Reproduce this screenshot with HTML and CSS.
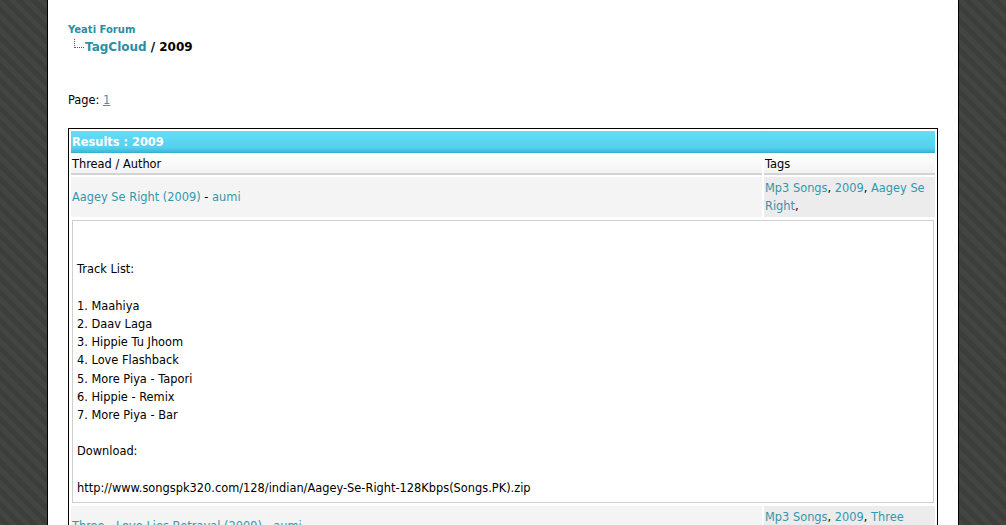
FILE: index.html
```html
<!DOCTYPE html>
<html>
<head>
<meta charset="utf-8">
<title>Yeati Forum - TagCloud / 2009</title>
<link rel="stylesheet" href="styles.css">
</head>
<body>
<div class="page">
  <div class="crumbs">
    <a class="crumb-root" href="#">Yeati Forum</a>
    <div class="crumb-child">
      <span class="tree"></span>
      <a class="crumb-link" href="#">TagCloud</a> <span class="crumb-current">/ 2009</span>
    </div>
  </div>

  <div class="pager">Page: <a href="#">1</a></div>

  <table class="results">
    <tr><td class="title" colspan="2">Results : 2009</td></tr>
    <tr class="head"><td class="h-thread">Thread / Author</td><td class="h-tags">Tags</td></tr>
    <tr class="row">
      <td class="c-thread"><a href="#">Aagey Se Right (2009)</a> - <a href="#">aumi</a></td>
      <td class="c-tags"><a href="#">Mp3 Songs</a>, <a href="#">2009</a>, <a href="#">Aagey Se Right</a>,</td>
    </tr>
    <tr>
      <td class="c-body" colspan="2">
        <div class="post">
          <br><br>Track List:<br><br>1. Maahiya<br>2. Daav Laga<br>3. Hippie Tu Jhoom<br>4. Love Flashback<br>5. More Piya - Tapori<br>6. Hippie - Remix<br>7. More Piya - Bar<br><br>Download:<br><br>http://www.songspk320.com/128/indian/Aagey-Se-Right-128Kbps(Songs.PK).zip
        </div>
      </td>
    </tr>
    <tr class="row">
      <td class="c-thread"><a href="#">Three - Love Lies Betrayal (2009)</a> - <a href="#">aumi</a></td>
      <td class="c-tags"><a href="#">Mp3 Songs</a>, <a href="#">2009</a>, <a href="#">Three Love Lies Betrayal</a>,</td>
    </tr>
  </table>
</div>
</body>
</html>
```

FILE: styles.css
```css
html, body {
  margin: 0;
  padding: 0;
}
body {
  background-color: #3e403d;
  background-image: repeating-linear-gradient(45deg, #3c3e3b 0px, #3c3e3b 5px, #434542 5px, #434542 10px);
  font-family: "DejaVu Sans", Verdana, sans-serif;
  font-size: 11.4px;
  color: #000;
  min-height: 525px;
}
a {
  color: #3397ad;
  text-decoration: none;
}
.page {
  width: 870px;
  margin: 0 auto;
  background: #fff;
  border-left: 1px solid #000;
  border-right: 1px solid #000;
  padding: 23px 20px 40px 20px;
  min-height: 600px;
}
.crumbs {
  line-height: 13px;
}
.crumb-root {
  font-weight: bold;
  font-size: 10px;
  color: #2b8ea4;
}
.crumb-child {
  display: flex;
  align-items: flex-end;
  margin-left: 6px;
  margin-top: 3px;
  font-size: 12px;
  font-weight: bold;
  line-height: 16px;
}
.tree {
  width: 9px;
  height: 8px;
  border-left: 1px dotted #555;
  border-bottom: 1px dotted #555;
  margin-bottom: 6px;
  margin-right: 1px;
  align-self: flex-start;
}
.crumb-link {
  color: #2b8ea4;
  margin-right: 4px;
}
.crumb-current {
  color: #000;
}
.pager {
  margin-top: 39px;
  line-height: 13px;
}
.pager a {
  text-decoration: underline;
}
.results {
  width: 100%;
  margin-top: 21px;
  border: 1px solid #000;
  border-collapse: separate;
  border-spacing: 2px;
  font-size: 11.4px;
}
.results td {
  padding: 0;
  vertical-align: middle;
}
.title {
  height: 21px;
  background: linear-gradient(#66ddf8, #55d0ee 80%, #3fb8dc);
  color: #fff;
  font-weight: bold;
  padding: 0 0 0 1px !important;
  border-bottom: 1px solid #3aafd4;
}
.head td {
  height: 18px;
  background: linear-gradient(#ffffff, #f2f2f2);
  border-bottom: 2px solid #d3d3d3;
  padding-left: 1px !important;
}
.h-tags {
  width: 170px;
}
.row td {
  background: #f4f4f4;
  line-height: 18px;
  padding: 2px 1px !important;
}
.row .c-tags {
  background: #ececec;
  vertical-align: top;
}
.c-body {
  padding: 1px !important;
  background: #fff;
}
.post {
  border: 1px solid #cfcfcf;
  padding: 3px 4px 5px 4px;
  line-height: 18.2px;
  background: #fff;
}
```
